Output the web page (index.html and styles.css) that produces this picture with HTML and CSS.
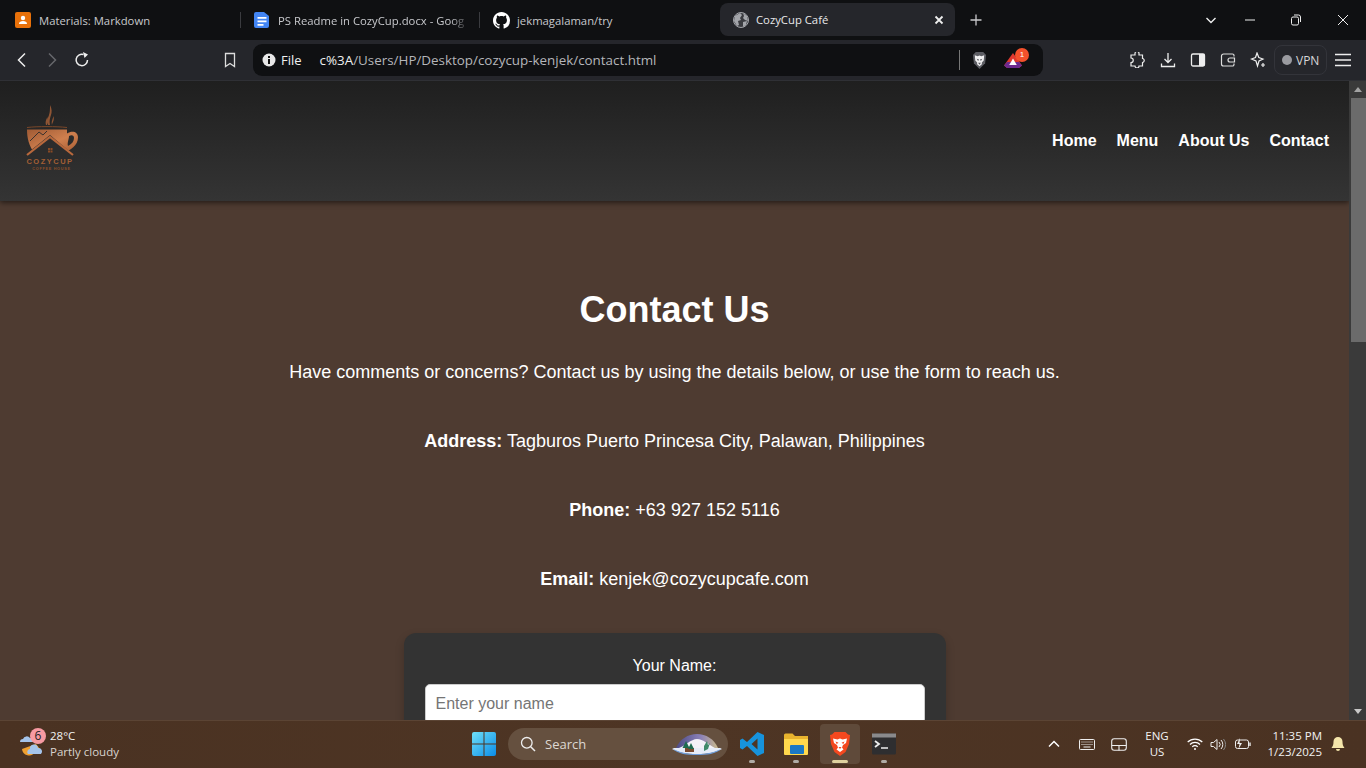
FILE: index.html
```html
<!DOCTYPE html>
<html lang="en">
<head>
<meta charset="utf-8">
<title>CozyCup Café</title>
<link rel="stylesheet" href="styles.css">
</head>
<body>
<div class="tabbar">
  <div class="tab t1">
    <svg class="fav" viewBox="0 0 16 16"><rect width="16" height="16" rx="2" fill="#e8710a"/><circle cx="8" cy="6" r="2.2" fill="#fff"/><path d="M4 12c0-2.2 1.800-3 4-3s4 .8 4 3z" fill="#fff"/></svg>
    <span>Materials: Markdown</span>
  </div>
  <i class="sep"></i>
  <div class="tab t2">
    <svg class="fav" viewBox="0 0 16 16"><path d="M2 0h8l5 4v10a2 2 0 0 1-2 2H2a2 2 0 0 1-2-2V2a2 2 0 0 1 2-2z" fill="#4285f4"/><path d="M3.500 5h9v1.800h-9zM3.500 8.500h9v1.800h-9zM3.500 12h6v1.800h-6z" fill="#fff"/></svg>
    <span class="fade">PS Readme in CozyCup.docx - Goog</span>
  </div>
  <i class="sep"></i>
  <div class="tab t3">
    <svg class="fav gh" viewBox="0 0 16 16"><path fill="#fff" d="M8 0C3.58 0 0 3.58 0 8c0 3.54 2.29 6.53 5.47 7.59.4.07.55-.17.55-.38 0-.19-.01-.82-.01-1.49-2.01.37-2.53-.49-2.69-.94-.09-.23-.48-.94-.82-1.13-.28-.15-.68-.52-.01-.53.63-.01 1.08.58 1.23.82.72 1.21 1.87.87 2.33.66.07-.52.28-.87.51-1.07-1.78-.2-3.64-.89-3.64-3.95 0-.87.31-1.59.82-2.15-.08-.2-.36-1.02.08-2.12 0 0 .67-.21 2.2.82.64-.18 1.32-.27 2-.27s1.36.09 2 .27c1.53-1.04 2.2-.82 2.2-.82.44 1.1.16 1.92.08 2.12.51.56.82 1.27.82 2.15 0 3.07-1.87 3.75-3.65 3.95.29.25.54.73.54 1.48 0 1.07-.01 1.93-.01 2.2 0 .21.15.46.55.38A8.01 8.01 0 0 0 16 8c0-4.42-3.58-8-8-8z"/></svg>
    <span>jekmagalaman/try</span>
  </div>
  <div class="tab active">
    <svg class="fav" viewBox="0 0 16 16"><circle cx="8" cy="8" r="7.500" fill="#3a3b40" stroke="#a3a5aa"/><path d="M2 4l5-3 2 2-2 3 1 2-3 1 1 4-2 1-3-5zM10 1l4 3 1 5-3-1-2-2 1-2zM10 10l4-1-1 4-3 2z" fill="#a3a5aa"/></svg>
    <span>CozyCup Café</span>
    <svg class="close" viewBox="0 0 10 10"><path d="M1.500 1.500l7 7M8.500 1.500l-7 7" stroke="#eee" stroke-width="1.800"/></svg>
  </div>
  <svg class="plus" viewBox="0 0 12 12"><path d="M6 .5v11M.5 6h11" stroke="#c9c9cc" stroke-width="1.300"/></svg>
  <div class="winctl">
    <svg class="w1" viewBox="0 0 12 12"><path d="M1.500 4l4.500 4.500L10.500 4" fill="none" stroke="#eee" stroke-width="1.400"/></svg>
    <svg class="w2" viewBox="0 0 12 12"><path d="M1 6h10" stroke="#eee" stroke-width="1"/></svg>
    <svg class="w3" viewBox="0 0 12 12"><rect x="1.500" y="3" width="7" height="8" rx="1.500" fill="none" stroke="#eee"/><path d="M4 1h4.500A2 2 0 0 1 10.500 3v5" fill="none" stroke="#eee"/></svg>
    <svg class="w4" viewBox="0 0 12 12"><path d="M1 1l10 10M11 1L1 11" stroke="#eee" stroke-width="1"/></svg>
  </div>
</div>
<div class="toolbar">
  <svg class="tb back" viewBox="0 0 16 16"><path d="M11 1.500L4.500 8l6.500 6.500" fill="none" stroke="#eee" stroke-width="1.500"/></svg>
  <svg class="tb fwd" viewBox="0 0 16 16"><path d="M5 1.500L11.500 8 5 14.500" fill="none" stroke="#66676b" stroke-width="1.500"/></svg>
  <svg class="tb reload" viewBox="0 0 16 16"><path d="M13.500 8A5.700 5.700 0 1 1 9.500 2.500" fill="none" stroke="#eee" stroke-width="1.500"/><path d="M9 0l5 2.500L10.500 6z" fill="#eee"/></svg>
  <svg class="tb mark" viewBox="0 0 16 16"><path d="M3.500 1.500h9v13L8 11.500l-4.500 3z" fill="none" stroke="#ddd" stroke-width="1.300"/></svg>
  <div class="omni">
    <svg class="info" viewBox="0 0 14 14"><circle cx="7" cy="7" r="6.500" fill="#e8e8e8"/><path d="M6 6h2v5H6zM6 3h2v2H6z" fill="#111"/></svg>
    <span class="file">File</span>
    <span class="url"><b>c%3A</b>/Users/HP/Desktop/cozycup-kenjek/contact.html</span>
    <i class="osep"></i>
    <svg class="shield" viewBox="0 0 16 18"><path d="M4 0h8l3 3-1 9-6 6-6-6-1-9z" fill="#5c5d63"/><path d="M3 3.500l3 1 2-.8 2 .8 3-1-.5 5.500-2 2v2L8 15l-2.500-2v-2l-2-2z" fill="#f0f0f1"/><path d="M5 7l2.500 1-1 1.500zM11 7L8.500 8l1 1.500zM6.500 11.500h3L8 13.500z" fill="#55565c"/></svg>
    <span class="rew">
      <svg viewBox="0 0 18 15"><path d="M9 0l9 12.500L15 15H3L0 12.500z" fill="#e0382e"/><path d="M0 12.500L3 9h12l3 3.500L15 15H3z" fill="#6d2a8e"/><path d="M9 5.500l3.800 6.500H5.200z" fill="#fff"/></svg>
      <em>1</em>
    </span>
  </div>
  <svg class="tb2 ext" viewBox="0 0 16 16"><path d="M6 1.500a2 2 0 0 1 4 0L10 3h3.500v3.500a2 2 0 0 1 1 3.500l-1 .5V14H10a2 2 0 0 1-4 0H2V10.500a2 2 0 0 0 0-4.500V3h4z" fill="none" stroke="#eee" stroke-width="1.200"/></svg>
  <svg class="tb2 dl" viewBox="0 0 16 16"><path d="M8 1v9M4.500 7L8 10.500 11.500 7M1.500 11.500v3h13v-3" fill="none" stroke="#eee" stroke-width="1.300"/></svg>
  <svg class="tb2 side" viewBox="0 0 16 16"><rect x="1.500" y="2" width="13" height="12" rx="1.500" fill="none" stroke="#eee" stroke-width="1.300"/><rect x="9" y="2" width="5.500" height="12" fill="#eee"/></svg>
  <svg class="tb2 wal" viewBox="0 0 16 16"><path d="M14 4.500V3.500A1.500 1.500 0 0 0 12.500 2h-9A2 2 0 0 0 1.500 4v8A2 2 0 0 0 3.500 14h9a1.500 1.500 0 0 0 1.500-1.500v-1M14.500 6H10a2 2 0 0 0 0 4h4.500z" fill="none" stroke="#ddd" stroke-width="1.200"/></svg>
  <svg class="tb2 leo" viewBox="0 0 16 16"><path d="M7 1l1.800 4.500L13 7l-4 2-1.500 5L6 9 1.500 7l4-1.500z" fill="none" stroke="#eee" stroke-width="1.200"/><path d="M13 11v4M11 13h4" stroke="#eee" stroke-width="1.200"/></svg>
  <div class="vpn"><i></i><span>VPN</span></div>
  <svg class="tb2 menu" viewBox="0 0 16 14"><path d="M0 1.500h16M0 7h16M0 12.500h16" stroke="#eee" stroke-width="1.300"/></svg>
</div>
<div class="view">
  <div class="page">
    <header class="site">
      <svg class="logo" viewBox="0 0 60 72">
        <defs>
          <linearGradient id="cu" x1="0" y1="0" x2="1" y2="1"><stop offset="0" stop-color="#9f5a34"/><stop offset=".55" stop-color="#cf7f4e"/><stop offset="1" stop-color="#a65c32"/></linearGradient>
        </defs>
        <path d="M26 20c-2-4 0-7 1-10 1-3 1-6 1-10 2 4 2 7 1 10-1 3-2 6-1 10zM24 20c-1-3 0-5 1.500-8 0 3-.5 5-.5 8zM30 20c-1-4 1-6 1.500-9 .5 2 .5 4-.5 6-.5 1-1 2-1 3z" fill="#8f5534"/>
        <path d="M5 22.500c10-1.200 30-1.200 40 0" fill="none" stroke="#7a4729" stroke-width="1"/>
        <path d="M5 24.500h40v4c5-3 11-2 11 4 0 8-8 13-14 15H12C7 41 5 33 5 24.500z" fill="url(#cu)"/>
        <path d="M47 31c3-1.500 5-.5 5 2 0 3-2 6-6 8-1-3 1-7 1-10z" fill="#2b2b2b"/>
        <path d="M8 36l9-9 4 3 4-4" fill="none" stroke="#2b2b2b" stroke-width=".9"/>
        <path d="M3 50L28 30l25 21v6H3z" fill="#2c2c2c"/>
        <path d="M5 50L28 32l23 18" fill="none" stroke="#b8683c" stroke-width="2.200"/>
        <path d="M26 43h2v2h-2zM28.500 43h2v2h-2zM26 45.500h2v2h-2zM28.500 45.500h2v2h-2z" fill="#8a4a25"/>
        <text x="28" y="59" class="lt1" text-anchor="middle">COZYCUP</text>
        <text x="29.500" y="65" class="lt2" text-anchor="middle">COFFEE HOUSE</text>
      </svg>
      <nav class="nav"><a>Home</a><a>Menu</a><a>About Us</a><a>Contact</a></nav>
    </header>
    <main class="content">
      <h1>Contact Us</h1>
      <p>Have comments or concerns? Contact us by using the details below, or use the form to reach us.</p>
      <p><b>Address:</b> Tagburos Puerto Princesa City, Palawan, Philippines</p>
      <p><b>Phone:</b> +63 927 152 5116</p>
      <p class="last"><b>Email:</b> kenjek@cozycupcafe.com</p>
      <form class="card">
        <label for="nm">Your Name:</label>
        <input id="nm" type="text" placeholder="Enter your name">
      </form>
    </main>
  </div>
  <div class="scroll">
    <svg class="arr" viewBox="0 0 8 5"><path d="M4 0l4 5H0z" fill="#a3a3a3"/></svg>
    <div class="thumb"></div>
    <svg class="arr bot" viewBox="0 0 8 5"><path d="M0 0h8L4 5z" fill="#c8c8c8"/></svg>
  </div>
</div>
<footer class="taskbar">
  <div class="weather">
    <div class="wicon">
      <svg viewBox="0 0 26 26"><path d="M3 18a7 7 0 0 0 13 3l5-3-4-5z" fill="#f0a030"/><path d="M1 11a3 3 0 0 1 3-3 4 4 0 0 1 7-1 3 3 0 0 1 3 4z" fill="#a5c4ea"/><path d="M9 23a3 3 0 0 1 2-5 4 4 0 0 1 8-1 3.500 3.500 0 0 1 3 6z" fill="#a5c4ea"/></svg>
      <em>6</em>
    </div>
    <div class="wtext"><div>28°C</div><div class="dim">Partly cloudy</div></div>
  </div>
  <div class="center">
    <svg class="win" viewBox="0 0 24 24"><defs><linearGradient id="wg" x1="0" y1="0" x2="1" y2="1"><stop offset="0" stop-color="#6fe0f8"/><stop offset="1" stop-color="#0a8ce8"/></linearGradient></defs><path d="M0 2a2 2 0 0 1 2-2h9.500v11.500H0zM12.500 0H22a2 2 0 0 1 2 2v9.500H12.500zM0 12.500h11.500V24H2a2 2 0 0 1-2-2zM12.500 12.500H24V22a2 2 0 0 1-2 2h-9.500z" fill="url(#wg)"/></svg>
    <div class="search">
      <svg viewBox="0 0 16 16"><circle cx="6.800" cy="6.800" r="5.300" fill="none" stroke="#eee" stroke-width="1.300"/><path d="M10.700 10.700L15 15" stroke="#eee" stroke-width="1.500"/></svg>
      <span>Search</span>
      <svg class="art" viewBox="0 0 50 24">
        <defs><linearGradient id="sk" x1="0" y1="0" x2="1" y2="0"><stop offset="0" stop-color="#4c4a86"/><stop offset=".6" stop-color="#8c82b8"/><stop offset="1" stop-color="#c9b98c"/></linearGradient></defs>
        <path d="M4 16C8 7 16 2 25 2s17 5 21 14z" fill="url(#sk)"/>
        <path d="M7 16c6-2 12-9 18-9 6 0 12 6 18 9z" fill="#f3f1f8"/>
        <path d="M2 16h46c2 1 2 1 2 1-5 3-14 5-25 5S5 20 0 17z" fill="#e6ecf8"/>
        <path d="M1 17c6 3 14 5 24 5s18-2 24-5c-5 5-14 6-24 6S6 22 1 17z" fill="#6f9fdc"/>
        <path d="M13 20h9v-4h-9z" fill="#7a4a30"/>
        <path d="M14 9l3.500 7h-7zM19 11l3 6h-6z" fill="#1f6a50"/>
        <path d="M32 14l3-5 1 4 2-2-2 6-4 2z" fill="#3f8a6a"/>
      </svg>
    </div>
    <div class="app"><svg class="ic" viewBox="0 0 24 24"><path d="M17.500 0L24 3v18l-6.500 3L7 14l-4.500 3.500L0 16V8l2.500-1.500L7 10zM17.500 6.500L11.500 12l6 5.500z" fill="#1793dc"/></svg><i></i></div>
    <div class="app"><svg class="ic" viewBox="0 0 24 24"><path d="M0 3a1.500 1.500 0 0 1 1.500-1.500h7L11 4h13v18H0z" fill="#e8b32e"/><path d="M0 7h24v15a1 1 0 0 1-1 1H1a1 1 0 0 1-1-1z" fill="#ffd84d"/><rect x="6" y="13" width="14" height="9" rx="1" fill="#1a78c4"/></svg><i></i></div>
    <div class="app on"><svg class="ic" viewBox="0 0 24 24"><path d="M6.500 0h11l2.500 2.500 2 .5-1 9-3.500 8L12 24l-5.500-4L3 12 2 3l2-.5z" fill="#f4481f"/><path d="M5 6.500l4.500 1L12 6.500l2.500 1L19 6.500l-1 4.500-3 2-1 2.500 1.500 2L12 20l-3.500-2.500L10 15.500 9 13l-3-2z" fill="#fff"/><path d="M7.500 9.500l3 1.200-1.800 1.300zM16.500 9.500l-3 1.200 1.800 1.300zM10.500 15h3L12 17z" fill="#f4481f"/></svg><i></i></div>
    <div class="app"><svg class="ic" viewBox="0 0 24 24"><rect width="24" height="21" y="1.500" rx="1.500" fill="#2e2e30"/><rect width="24" height="4" y="1.500" fill="#8a8a8c"/><path d="M3 9l4 3-4 3" fill="none" stroke="#eee" stroke-width="1.800"/><path d="M9 16h7" stroke="#eee" stroke-width="1.500"/></svg><i></i></div>
  </div>
  <div class="tray">
    <svg class="up" viewBox="0 0 12 8"><path d="M1 6.500L6 1.500l5 5" fill="none" stroke="#fff" stroke-width="1.500"/></svg>
    <svg class="kbd" viewBox="0 0 16 11"><rect x=".5" y=".5" width="15" height="10" rx="1" fill="none" stroke="#eee"/><path d="M2.500 3h11M2.500 5.500h11" stroke="#eee" stroke-dasharray="1 1"/><path d="M4.500 8h7" stroke="#eee"/></svg>
    <svg class="pad" viewBox="0 0 16 13"><rect x=".7" y=".7" width="14.600" height="11.600" rx="2.500" fill="none" stroke="#eee" stroke-width="1.100"/><path d="M.7 7.500h14.600M8 7.500v5" stroke="#eee" stroke-width="1.100"/></svg>
    <div class="lang"><div>ENG</div><div>US</div></div>
    <svg class="wifi" viewBox="0 0 16 12"><path d="M.7 4a10.500 10.500 0 0 1 14.600 0M3 6.500a7 7 0 0 1 10 0M5.300 8.800a3.500 3.500 0 0 1 5.400 0" fill="none" stroke="#fff" stroke-width="1.200"/><circle cx="8" cy="11" r="1" fill="#fff"/></svg>
    <svg class="vol" viewBox="0 0 16 13"><path d="M1 4.500h2.500L7 1.500v10l-3.500-3H1z" fill="none" stroke="#eee"/><path d="M9 4a3.500 3.500 0 0 1 0 5M11 2a6.500 6.500 0 0 1 0 9" fill="none" stroke="#eee"/><path d="M13.500 1a9 9 0 0 1 0 11" fill="none" stroke="#888"/></svg>
    <svg class="bat" viewBox="0 0 17 12"><rect x=".5" y="2" width="13" height="8.500" rx="2" fill="none" stroke="#eee"/><path d="M15 4.500v3.500" stroke="#eee" stroke-width="1.400"/><path d="M5 0L2 6h2.500L3.500 11 7 5H4.500z" fill="#eee"/></svg>
    <div class="clock"><div>11:35 PM</div><div>1/23/2025</div></div>
    <svg class="bell" viewBox="0 0 14 15"><path d="M7 0a4.500 4.500 0 0 1 4.500 4.500c0 3 .5 4.500 2 6.500H.5c1.500-2 2-3.500 2-6.500A4.500 4.500 0 0 1 7 0zM5 12h4a2 2 0 0 1-4 0z" fill="#f5e6ab"/></svg>
  </div>
</footer>
</body>
</html>
```
FILE: styles.css
```css
* { box-sizing: border-box; }
html, body { margin: 0; height: 768px; overflow: hidden; }
body {
  display: flex;
  flex-direction: column;
  width: 1366px;
  font-family: "Open Sans", "Noto Sans", sans-serif;
  background: #111;
}
svg { display: block; flex: none; }

.tabbar {
  height: 40px;
  flex: none;
  display: flex;
  align-items: center;
  background: #0f1012;
  color: #c7c8cc;
  font-size: 11.300px;
  padding-left: 15px;
}
.tab { display: flex; align-items: center; height: 33px; white-space: nowrap; }
.tab span { display: block; }
.fav { width: 16px; height: 16px; margin-right: 8px; }
.t1 { width: 225px; }
.t2 { width: 225px; margin-left: 13px; }
.t2 .fade {
  width: 192px;
  -webkit-mask-image: linear-gradient(90deg, #000 90%, transparent);
  mask-image: linear-gradient(90deg, #000 90%, transparent);
}
.t3 { width: 227px; margin-left: 13px; }
.sep { width: 1px; height: 16px; background: #3a3b3f; flex: none; }
.t3 .gh { width: 17px; height: 17px; margin-right: 7px; }
.active {
  width: 235px;
  margin-top: -1px;
  padding-left: 13px;
  background: #25262b;
  border-radius: 8px;
  color: #e8e8ea;
}
.active .fav { margin-right: 7px; }
.close { width: 10px; height: 10px; margin-left: auto; margin-right: 11px; }
.plus { width: 12px; height: 12px; margin-left: 15px; }
.winctl { display: flex; align-items: center; margin-left: auto; }
.winctl svg { width: 12px; height: 12px; }
.w1 { margin-right: 27px; }
.w2 { margin-right: 34px; }
.w3 { margin-right: 35px; }
.w4 { margin-right: 17px; }

.toolbar {
  height: 41px;
  flex: none;
  display: flex;
  align-items: center;
  background: #25262b;
  border-bottom: 1px solid #2f3035;
  padding-left: 14px;
}
.tb { width: 16px; height: 16px; }
.fwd { margin-left: 14px; }
.reload { margin-left: 14px; }
.mark { margin-left: 132px; }
.omni {
  width: 790px;
  height: 32px;
  margin-left: 15px;
  display: flex;
  align-items: center;
  background: #0f1012;
  border-radius: 9px;
  padding-left: 9px;
  color: #b5b6ba;
  font-size: 13.400px;
}
.info { width: 14px; height: 14px; }
.file { color: #f0f0f0; margin-left: 5px; font-size: 13px; }
.url { margin-left: 18px; white-space: nowrap; }
.url b { font-weight: 400; color: #f0f0f0; }
.osep { width: 1px; height: 20px; background: #777; margin-left: auto; }
.shield { width: 15px; height: 17px; margin-left: 12px; }
.rew { display: flex; position: relative; margin-left: 17px; margin-right: 21px; }
.rew svg { width: 18px; height: 15px; }
.rew em {
  position: absolute;
  top: -5px;
  right: -7px;
  width: 14px;
  height: 14px;
  border-radius: 50%;
  background: #f4512c;
  color: #fff;
  font: normal 8px/14px "Liberation Sans", sans-serif;
  text-align: center;
}
.tb2 { width: 16px; height: 16px; }
.ext { margin-left: 86px; }
.dl { margin-left: 15px; }
.side { margin-left: 14px; }
.wal { margin-left: 14px; }
.leo { margin-left: 14px; }
.vpn {
  width: 53px;
  height: 30px;
  margin-left: 8px;
  border: 1px solid #33343a;
  border-radius: 8px;
  display: flex;
  align-items: center;
  padding-left: 7px;
  color: #d6d6d9;
  font-size: 12px;
}
.vpn i { width: 10px; height: 10px; border-radius: 50%; background: #9a9ba0; margin-right: 4px; }
.menu { margin-left: 8px; }

.view { flex: 1; min-height: 0; display: flex; }
.page {
  flex: 1;
  min-width: 0;
  overflow: hidden;
  background: #4e3b31;
  font-family: "Liberation Sans", Arial, sans-serif;
  color: #fff;
}
.site {
  height: 120px;
  display: flex;
  align-items: center;
  justify-content: space-between;
  padding: 0 20px 0 22px;
  background: linear-gradient(180deg, #1f1f1f, #343434);
  box-shadow: 0 2px 5px rgba(0, 0, 0, .5);
  position: relative;
}
.logo { width: 60px; height: 72px; }
.lt1 { font: bold 7.500px "Liberation Sans", sans-serif; letter-spacing: 1.500px; fill: #a35f35; }
.lt2 { font: bold 3.800px "Liberation Sans", sans-serif; letter-spacing: .7px; fill: #8a4f2c; }
.nav { display: flex; gap: 20px; }
.nav a { font-size: 16px; font-weight: 700; color: #fff; }
.content { text-align: center; padding-top: 88px; }
h1 { margin: 0 0 32px; font-size: 36px; line-height: 41px; font-weight: 700; }
.content p { margin: 0 0 48px; font-size: 18px; line-height: 21px; }
.content .last { margin-bottom: 43px; }
.card {
  width: 542px;
  margin: 0 auto;
  padding: 23px 21px;
  background: #333;
  border-radius: 12px;
  box-shadow: 0 4px 10px rgba(0, 0, 0, .2);
  display: flex;
  flex-direction: column;
  align-items: center;
}
.card label { font-size: 16px; line-height: 19px; margin-bottom: 9px; }
.card input {
  width: 100%;
  height: 40px;
  flex: none;
  padding: 0 10px;
  border: 1px solid #ccc;
  border-radius: 5px;
  background: #fff;
  font: 16px "Liberation Sans", sans-serif;
}
.card input::placeholder { color: #757575; }

.scroll {
  width: 17px;
  flex: none;
  background: #3a3a3a;
  display: flex;
  flex-direction: column;
  align-items: center;
}
.arr { width: 8px; height: 5px; margin: 6px 0; }
.thumb { width: 15px; height: 244px; background: #6b6b6b; align-self: flex-end; }
.bot { margin-top: auto; }

.taskbar {
  height: 48px;
  flex: none;
  display: flex;
  align-items: center;
  background: linear-gradient(90deg, #4a3222, #4e3524 50%, #4a3222);
  box-shadow: inset 0 1px 0 #5b4434;
  color: #f2f2f2;
  font-size: 11.500px;
  position: relative;
}
.weather { display: flex; align-items: center; width: 460px; padding-left: 19px; }
.wicon { position: relative; width: 26px; height: 26px; margin-right: 5px; }
.wicon svg { width: 26px; height: 26px; }
.wicon em {
  position: absolute;
  top: -3px;
  left: 11px;
  width: 16px;
  height: 16px;
  border-radius: 50%;
  background: #f79aa2;
  color: #222;
  font: normal 12px/16px "Open Sans", sans-serif;
  text-align: center;
}
.wtext { line-height: 16px; }
.dim { color: #d9d4cf; }
.center { display: flex; align-items: center; }
.win { width: 24px; height: 24px; margin-left: 12px; }
.search {
  width: 220px;
  height: 32px;
  margin-left: 12px;
  display: flex;
  align-items: center;
  padding-left: 12px;
  background: #65503f;
  border-radius: 16px;
  color: #ddd8d2;
  font-size: 13px;
}
.search svg { width: 16px; height: 16px; margin-right: 9px; }
.search .art { width: 50px; height: 24px; margin: 0 6px 0 auto; }
.app {
  width: 40px;
  height: 40px;
  margin-left: 4px;
  display: flex;
  flex-direction: column;
  align-items: center;
  border-radius: 4px;
  position: relative;
}
.ic { width: 24px; height: 24px; margin-top: 8px; }
.app i { width: 6px; height: 3px; margin-top: 4px; border-radius: 2px; background: #b0aca6; }
.on { background: #5f4a3a; }
.on i { width: 16px; background: #e0d2a0; }
.tray { display: flex; align-items: center; margin-left: auto; }
.up { width: 12px; height: 8px; }
.kbd { width: 16px; height: 11px; margin-left: 19px; }
.pad { width: 16px; height: 13px; margin-left: 16px; }
.lang { width: 26px; margin-left: 17px; text-align: center; line-height: 16px; }
.wifi { width: 16px; height: 12px; margin-left: 17px; }
.vol { width: 16px; height: 13px; margin-left: 7px; }
.bat { width: 17px; height: 12px; margin-left: 9px; }
.clock { width: 56px; margin-left: 14px; text-align: right; line-height: 16px; }
.bell { width: 14px; height: 15px; margin: 0 21px 0 9px; }
```
